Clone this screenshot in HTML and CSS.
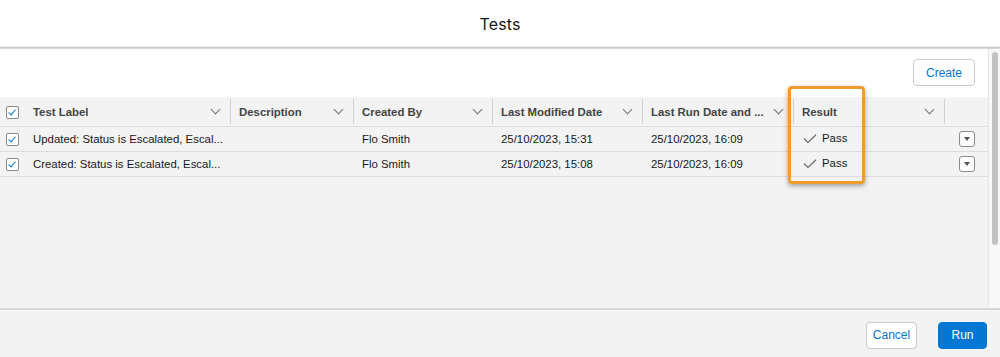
FILE: index.html
```html
<!DOCTYPE html>
<html lang="en">
<head>
    <meta charset="UTF-8">
    <meta name="viewport" content="width=device-width, initial-scale=1.0">
    <title>Tests</title>
    <link rel="stylesheet" href="styles.css">
</head>
<body>
    <div class="modal">
        <header class="modal-header">
            <h2>Tests</h2>
        </header>

        <div class="modal-body">
            <div class="body-content">
                <div class="toolbar">
                    <button class="btn btn-neutral">Create</button>
                </div>

                <table class="grid">
                    <colgroup>
                        <col style="width:25px">
                        <col style="width:206px">
                        <col style="width:123px">
                        <col style="width:139px">
                        <col style="width:150px">
                        <col style="width:151px">
                        <col style="width:151px">
                        <col style="width:43px">
                    </colgroup>
                    <thead>
                        <tr>
                            <th class="cell-check"><span class="checkbox checked"></span></th>
                            <th><div class="th-inner"><span>Test Label</span><span class="chev"></span></div></th>
                            <th><div class="th-inner"><span>Description</span><span class="chev"></span></div></th>
                            <th><div class="th-inner"><span>Created By</span><span class="chev"></span></div></th>
                            <th><div class="th-inner"><span>Last Modified Date</span><span class="chev"></span></div></th>
                            <th><div class="th-inner"><span>Last Run Date and ...</span><span class="chev"></span></div></th>
                            <th><div class="th-inner"><span>Result</span><span class="chev"></span></div></th>
                            <th class="cell-action"></th>
                        </tr>
                    </thead>
                    <tbody>
                        <tr>
                            <td class="cell-check"><span class="checkbox checked"></span></td>
                            <td>Updated: Status is Escalated, Escal...</td>
                            <td></td>
                            <td>Flo Smith</td>
                            <td>25/10/2023, 15:31</td>
                            <td>25/10/2023, 16:09</td>
                            <td><span class="pass"><svg class="tick" viewBox="0 0 14 10" width="14" height="10"><path d="M1 4.5 L5 8.5 L13 0.8" fill="none" stroke="#6b6b6b" stroke-width="1.2"/></svg>Pass</span></td>
                            <td class="cell-action"><span class="menu-btn"></span></td>
                        </tr>
                        <tr>
                            <td class="cell-check"><span class="checkbox checked"></span></td>
                            <td>Created: Status is Escalated, Escal...</td>
                            <td></td>
                            <td>Flo Smith</td>
                            <td>25/10/2023, 15:08</td>
                            <td>25/10/2023, 16:09</td>
                            <td><span class="pass"><svg class="tick" viewBox="0 0 14 10" width="14" height="10"><path d="M1 4.5 L5 8.5 L13 0.8" fill="none" stroke="#6b6b6b" stroke-width="1.2"/></svg>Pass</span></td>
                            <td class="cell-action"><span class="menu-btn"></span></td>
                        </tr>
                    </tbody>
                </table>

                <div class="highlight"></div>
            </div>

            <div class="scrollbar"><div class="thumb"></div></div>
        </div>

        <footer class="modal-footer">
            <button class="btn btn-neutral">Cancel</button>
            <button class="btn btn-brand">Run</button>
        </footer>
    </div>
</body>
</html>
```

FILE: styles.css
```css
body {
    font-family: "Liberation Sans", Arial, sans-serif;
    margin: 0;
    background: #f3f3f3;
    color: #181818;
}
.modal {
    display: flex;
    flex-direction: column;
    height: 357px;
    overflow: hidden;
}
.modal-header {
    height: 46px;
    background: #fff;
    border-bottom: 1px solid #ececec;
    box-shadow: 0 1px 0 #c9c9c9, 0 2px 0 #d6d6d6;
    display: flex;
    align-items: center;
    justify-content: center;
    position: relative;
    z-index: 1;
}
.modal-header h2 {
    margin: 0;
    font-family: Inter, "Liberation Sans", sans-serif;
    font-size: 16px;
    font-weight: 400;
    letter-spacing: 0.1px;
    padding-top: 1px;
}
.modal-body {
    flex: 1;
    display: flex;
    min-height: 0;
    margin-top: 2px;
}
.body-content {
    flex: 1;
    position: relative;
}
.toolbar {
    height: 48px;
    background: #fff;
    display: flex;
    justify-content: flex-end;
    align-items: flex-start;
    padding-right: 13px;
}
.toolbar .btn {
    margin-top: 10px;
    width: 62px;
}
.btn {
    height: 27px;
    border-radius: 4px;
    font-family: inherit;
    font-size: 12px;
    padding: 0 12px;
    cursor: pointer;
}
.btn-neutral {
    background: #fff;
    border: 1px solid #c9c9c9;
    color: #0176d3;
}
.btn-brand {
    background: #0176d3;
    border: 1px solid #0176d3;
    color: #fff;
}
.grid {
    width: 988px;
    border-collapse: collapse;
    table-layout: fixed;
    font-size: 11.4px;
}
.grid th {
    height: 29px;
    padding: 0;
    text-align: left;
    font-weight: 700;
    color: #444;
    background: #f3f3f3;
    border-bottom: 1px solid #dcdcdc;
}
.th-inner {
    display: flex;
    align-items: center;
    justify-content: space-between;
    padding: 0 11px 0 8px;
    height: 25px;
    border-right: 1px solid #d0d0d0;
    white-space: nowrap;
}
.grid th.cell-check .checkbox {
    margin-top: 1px;
}
.chev {
    width: 6px;
    height: 6px;
    border-right: 1.3px solid #747474;
    border-bottom: 1.3px solid #747474;
    transform: rotate(45deg);
    margin-top: -4px;
    flex-shrink: 0;
}
.grid td {
    height: 24px;
    padding: 0 0 0 8px;
    border-bottom: 1px solid #dcdcdc;
    white-space: nowrap;
    overflow: hidden;
}
.grid .cell-check {
    padding: 0 0 0 6px;
    text-align: left;
}
.checkbox {
    display: block;
    width: 11px;
    height: 11px;
    border: 1px solid #8a8a8a;
    border-radius: 2px;
    background: #fff;
    position: relative;
}
.checkbox.checked::after {
    content: "";
    position: absolute;
    left: 3px;
    top: 1px;
    width: 3px;
    height: 6px;
    border-right: 1.5px solid #0176d3;
    border-bottom: 1.5px solid #0176d3;
    transform: rotate(40deg);
}
.pass {
    display: inline-flex;
    align-items: center;
    gap: 5px;
    padding-left: 1px;
}
.tick {
    display: block;
    margin-top: 2px;
}
.grid td.cell-action {
    padding: 0 0 0 14px;
}
.menu-btn {
    display: block;
    width: 14px;
    height: 14px;
    border: 1px solid #8c8c8c;
    border-radius: 3px;
    background: #fff;
    position: relative;
}
.menu-btn::after {
    content: "";
    position: absolute;
    left: 4px;
    top: 5px;
    border-left: 3px solid transparent;
    border-right: 3px solid transparent;
    border-top: 4px solid #555;
}
.highlight {
    position: absolute;
    left: 788px;
    top: 37px;
    width: 71px;
    height: 92px;
    border: 3px solid #f29a2e;
    border-radius: 4px;
    box-shadow: 0 2px 5px rgba(0,0,0,0.35);
    pointer-events: none;
}
.scrollbar {
    width: 11px;
    border-left: 1px solid #e6e6e6;
    background: #f8f8f8;
    padding-top: 3px;
}
.thumb {
    width: 6px;
    height: 193px;
    margin-left: 3px;
    border-radius: 3px;
    background: #c2c2c2;
}
.modal-footer {
    height: 46px;
    background: #f3f3f3;
    border-top: 1px solid #fafafa;
    box-shadow: 0 -1px 0 #cfcfcf, 0 -2px 0 #d9d9d9;
    display: flex;
    justify-content: flex-end;
    align-items: center;
    gap: 21px;
    padding-right: 13px;
    position: relative;
}
.modal-footer .btn {
    height: 27px;
    margin-top: 2px;
}
.modal-footer .btn-neutral {
    width: 51px;
    padding: 0;
}
.modal-footer .btn-brand {
    width: 49px;
    padding: 0;
}
```
